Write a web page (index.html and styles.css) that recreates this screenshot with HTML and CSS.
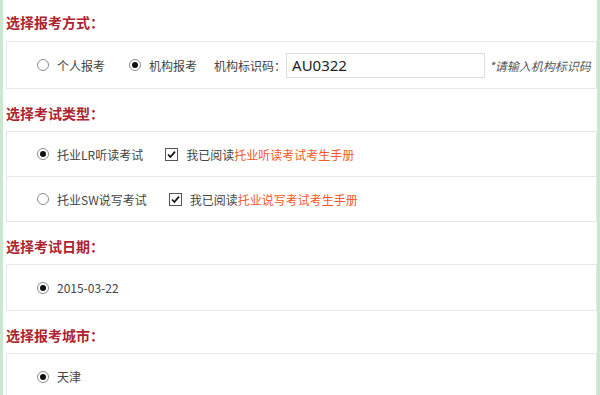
FILE: index.html
```html
<!DOCTYPE html>
<html>
<head>
<meta charset="utf-8" />
    <title>选择报考信息</title>
    <link rel="stylesheet" href="styles.css">
</head>
<body>
    <div id="content_body">
        <h4 class="step_title first">选择报考方式：</h4>
        <div class="step_box">
            <div class="row row_code">
                <span class="radio"></span><span class="label">个人报考</span>
                <span class="radio checked"></span><span class="label">机构报考</span>
                <span class="code_name">机构标识码：</span><input type="text" class="input" id="org_code" value="AU0322" />
                <span class="tip">*请输入机构标识码</span>
            </div>
        </div>

        <h4 class="step_title">选择考试类型：</h4>
        <div class="step_box">
            <div class="row row_type">
                <span class="radio checked"></span><span class="label">托业LR听读考试</span>
                <span class="check"><svg width="13" height="13" viewBox="0 0 13 13"><rect x="0.5" y="0.5" width="12" height="12" fill="#fff" stroke="#555"/><path d="M3 6.5 L5.4 9 L10 3.6" fill="none" stroke="#111" stroke-width="1.7"/></svg></span>
                <span class="label">我已阅读<a href="#" class="book">托业听读考试考生手册</a></span>
            </div>
            <div class="row row_type">
                <span class="radio"></span><span class="label">托业SW说写考试</span>
                <span class="check"><svg width="13" height="13" viewBox="0 0 13 13"><rect x="0.5" y="0.5" width="12" height="12" fill="#fff" stroke="#555"/><path d="M3 6.5 L5.4 9 L10 3.6" fill="none" stroke="#111" stroke-width="1.7"/></svg></span>
                <span class="label">我已阅读<a href="#" class="book">托业说写考试考生手册</a></span>
            </div>
        </div>

        <h4 class="step_title">选择考试日期：</h4>
        <div class="step_box">
            <div class="row">
                <span class="radio checked"></span><span class="label">2015-03-22</span>
            </div>
        </div>

        <h4 class="step_title">选择报考城市：</h4>
        <div class="step_box">
            <div class="row">
                <span class="radio checked"></span><span class="label">天津</span>
            </div>
        </div>
    </div>
</body>
</html>
```

FILE: styles.css
```css
* {
    margin:0;
    padding:0;
    font-family:'Microsoft YaHei','Noto Sans CJK SC',sans-serif;
}
body,html {
    width:100%;
    height:100%;
    overflow:hidden;
}
#content_body {
    min-height:100%;
    border-left:3px solid #c9e8cf;
    border-right:3px solid #c9e8cf;
    padding-left:3px;
}
.step_title {
    font-size:14px;
    font-weight:bold;
    line-height:22px;
    color:#ae2330;
    padding:13px 0 7px 0;
}
    .step_title.first {
        padding:11px 0 8px 0;
    }
.step_box {
    border:1px solid #e6e6e6;
}
.row {
    height:45px;
    display:flex;
    align-items:center;
    padding-left:29px;
    font-size:12px;
    color:#444;
    white-space:nowrap;
}
.row_code {
    height:46px;
}
.row_type {
    height:44px;
}
    .row_type + .row_type {
        border-top:1px solid #e6e6e6;
    }
.radio {
    display:inline-block;
    flex-shrink:0;
    box-sizing:border-box;
    width:12px;
    height:12px;
    border:1px solid #8c8c8c;
    border-radius:50%;
    background:#fff;
    margin-right:8px;
    position:relative;
    margin-left:1px;
}
    .radio.checked::after {
        content:'';
        position:absolute;
        left:2px;
        top:2px;
        width:6px;
        height:6px;
        border-radius:50%;
        background:#111;
    }
.label {
    margin-right:23px;
}
.row_type .label {
    margin-right:22px;
}
.check {
    display:inline-block;
    flex-shrink:0;
    width:13px;
    height:13px;
    margin-right:8px;
}
    .check svg {
        display:block;
    }
.book {
    color:#f35a1f;
    text-decoration:none;
}
.code_name {
    margin-left:-6px;
}
#org_code {
    flex-shrink:0;
    width:199px;
    height:25px;
    box-sizing:border-box;
    border:1px solid #dcdcdc;
    padding-left:5px;
    font-size:15px;
    color:#222;
    font-family:'Noto Sans','Noto Sans CJK SC',sans-serif;
    outline:none;
}
.tip {
    margin-left:4px;
    font-style:italic;
    color:#555;
    font-size:12px;
}
```
